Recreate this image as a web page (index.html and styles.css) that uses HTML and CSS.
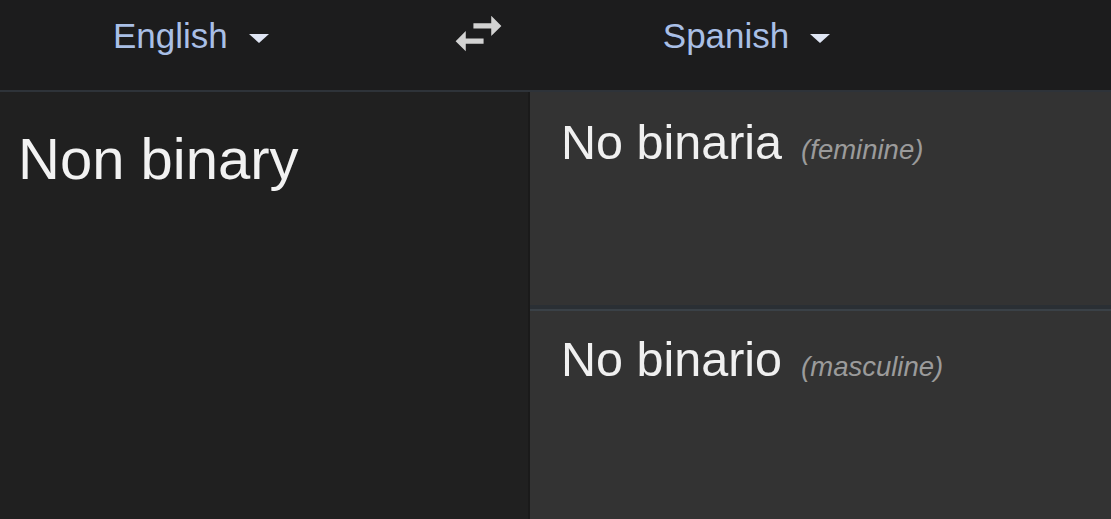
FILE: index.html
```html
<!DOCTYPE html>
<html lang="en">
<head>
<meta charset="utf-8">
<title>Translate</title>
<link rel="stylesheet" href="styles.css">
</head>
<body>
<div class="app">
  <header class="bar">
    <div class="lang lang-src">
      <span class="lang-name">English</span>
      <span class="caret"></span>
    </div>
    <svg class="swap" viewBox="0 0 24 24" aria-hidden="true">
      <path d="M6.99 11L3 15l3.99 4v-3H14v-2H6.99v-3zM21 9l-3.99-4v3H10v2h7.01v3L21 9z"/>
    </svg>
    <div class="lang lang-dst">
      <span class="lang-name">Spanish</span>
      <span class="caret"></span>
    </div>
  </header>
  <main class="panes">
    <section class="source">
      <p class="source-text">Non binary</p>
    </section>
    <section class="results">
      <div class="card card-top">
        <p class="result">No binaria<span class="gender">(feminine)</span></p>
      </div>
      <div class="sep"></div>
      <div class="card card-bottom">
        <p class="result">No binario<span class="gender">(masculine)</span></p>
      </div>
    </section>
  </main>
</div>
</body>
</html>
```

FILE: styles.css
```css
html, body {
  margin: 0;
  padding: 0;
  height: 100%;
  background: #1e1e1e;
  font-family: "Liberation Sans", Arial, sans-serif;
}

.app {
  display: flex;
  flex-direction: column;
  height: 519px;
  width: 1111px;
  overflow: hidden;
}

.bar {
  height: 90px;
  flex: none;
  background: #1c1c1d;
  border-bottom: 2px solid #2e3339;
  display: flex;
  align-items: flex-start;
  padding-left: 113px;
  box-sizing: content-box;
}

.lang {
  display: flex;
  align-items: flex-start;
  padding-top: 18px;
}

.lang-name {
  font-size: 35px;
  line-height: 35px;
  color: #a9bfe6;
}

.caret {
  width: 0;
  height: 0;
  border-left: 10px solid transparent;
  border-right: 10px solid transparent;
  border-top: 9px solid #dfe5f3;
  margin-top: 16px;
}

.lang-src .caret {
  margin-left: 21px;
}

.lang-dst .caret {
  margin-left: 21px;
}

.swap {
  width: 61px;
  height: 61px;
  fill: #d2d2d2;
  margin-top: 3px;
  margin-left: 179px;
}

.lang-dst {
  margin-left: 154px;
}

.panes {
  flex: 1;
  display: grid;
  grid-template-columns: 530px 1fr;
}

.source {
  background: #202020;
  border-right: 2px solid #1a1a1a;
  box-sizing: border-box;
  padding: 38px 0 0 18px;
}

.source-text {
  margin: 0;
  font-size: 58px;
  line-height: 1;
  color: #f2f2f2;
}

.results {
  display: flex;
  flex-direction: column;
  background: #333333;
}

.card {
  background: #333333;
  padding-left: 31px;
}

.card-top {
  height: 213px;
  box-sizing: border-box;
  padding-top: 26px;
}

.card-bottom {
  flex: 1;
  padding-top: 24px;
}

.sep {
  height: 2px;
  border-top: 4px solid #2a2f34;
  background: #3a4147;
}

.result {
  margin: 0;
  font-size: 48.5px;
  line-height: 1;
  color: #f0f0f0;
}

.gender {
  font-size: 27.5px;
  font-style: italic;
  color: #9b9b9b;
  margin-left: 19px;
}
```
